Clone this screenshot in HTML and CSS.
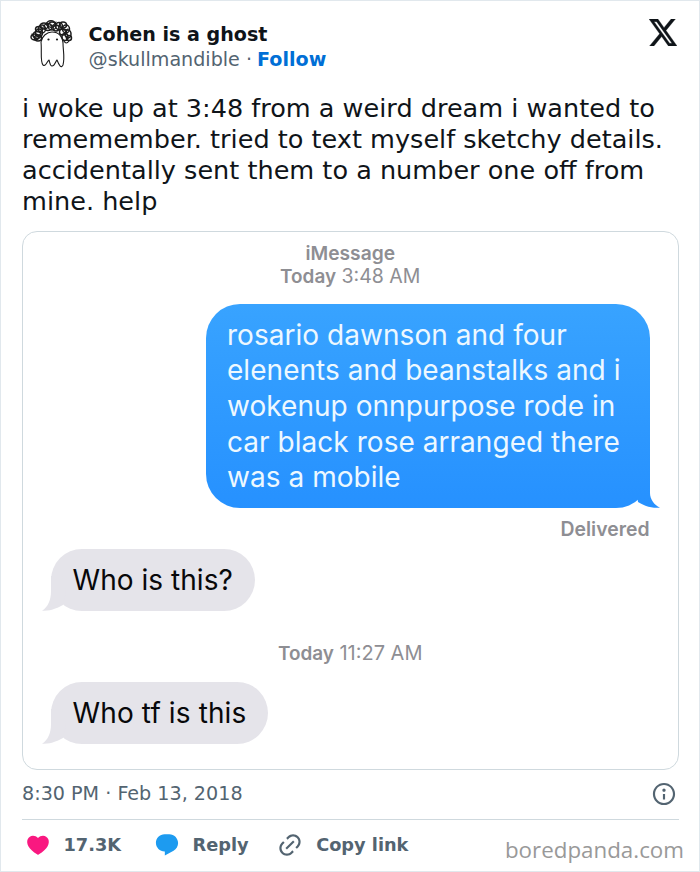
FILE: index.html
```
<!DOCTYPE html>
<html lang="en">
<head>
<meta charset="utf-8">
<title>Cohen is a ghost</title>
<link rel="stylesheet" href="styles.css">
</head>
<body>
<article class="tweet">
  <header class="header">
    <svg class="avatar" viewBox="0 0 58 58" fill="none" stroke="#1c1c1c" stroke-linecap="round" stroke-linejoin="round">
      <path stroke-width="1.1" d="M19 27C20 21 25 17 30 17C37 17 41 22 41 28C41 35 43 43 41 50C39 54 37 50 35 45C33 47 33 51 30 51C28 51 28 48 27 45C25 46 24 52 21 50C18 47 20 36 19 27Z"/>
      <g stroke-width="1.5">
        <ellipse cx="13" cy="22" rx="4" ry="3"/><ellipse cx="16" cy="23" rx="3.5" ry="3"/><ellipse cx="15" cy="20" rx="4" ry="3.5"/>
        <ellipse cx="17" cy="18" rx="3.5" ry="4"/><ellipse cx="17" cy="14" rx="3.5" ry="2.6"/><ellipse cx="20" cy="14" rx="3.5" ry="4"/>
        <ellipse cx="22" cy="11" rx="4" ry="3"/><ellipse cx="26" cy="12" rx="4" ry="3.5"/><ellipse cx="29" cy="9" rx="4.5" ry="3.2"/>
        <ellipse cx="30" cy="11" rx="4" ry="4"/><ellipse cx="34" cy="13" rx="3" ry="3"/><ellipse cx="37" cy="11" rx="3.5" ry="3.5"/>
        <ellipse cx="41" cy="10" rx="3.5" ry="3"/><ellipse cx="44" cy="14" rx="3.5" ry="4"/><ellipse cx="41" cy="17" rx="3.5" ry="3"/>
        <ellipse cx="46" cy="19" rx="3" ry="4"/><ellipse cx="43" cy="22" rx="3" ry="3.5"/><ellipse cx="47" cy="23" rx="2.5" ry="2.5"/>
      </g>
      <path stroke-width="1.1" d="M42 26Q44 30 47 26M10 19Q13 26 19 18M25 8Q30 14 34 7M38 9Q41 18 46 14"/>
      <g fill="#1c1c1c" stroke="none"><circle cx="26.500" cy="24.500" r="1.1"/><circle cx="35" cy="24.500" r="1.1"/></g>
    </svg>
    <div class="who">
      <div class="name">Cohen is a ghost</div>
      <div class="handle">@skullmandible · <span class="follow">Follow</span></div>
    </div>
    <svg class="x-logo" viewBox="1.2 2.2 21.6 19.6" preserveAspectRatio="none"><path fill="#0f1419" stroke="#0f1419" stroke-width=".25" d="M18.244 2.25h3.308l-7.227 8.26 8.502 11.24H16.17l-5.214-6.817L4.99 21.75H1.68l7.73-8.835L1.254 2.25H8.08l4.713 6.231zm-1.161 17.52h1.833L7.084 4.126H5.117z"/></svg>
  </header>
  <p class="text">i woke up at 3:48 from a weird dream i wanted to<br>rememember. tried to text myself sketchy details.<br>accidentally sent them to a number one off from<br>mine. help</p>
  <section class="media">
    <div class="stamp"><b class="service">iMessage</b><br><b>Today</b> 3:48 AM</div>
    <div class="bubble sent">rosario dawnson and four<br>elenents and beanstalks and i<br>wokenup onnpurpose rode in<br>car black rose arranged there<br>was a mobile
      <svg class="tail" viewBox="0 0 24 40"><defs><linearGradient id="blue" gradientUnits="userSpaceOnUse" x1="0" y1="-164" x2="0" y2="40"><stop stop-color="#38a3ff"/><stop offset="1" stop-color="#2691ff"/></linearGradient></defs><path fill="url(#blue)" d="M2 34L0 20L8 0H14V25C14 31 18 37 24 39.700C14 40.500 7 37 2 34Z"/></svg>
    </div>
    <div class="delivered">Delivered</div>
    <div class="bubble received first">Who is this?
      <svg class="tail" viewBox="0 0 24 40"><path d="M21 34L24 20L20 5H9V20C9 29 6 36 0 39.700C9 40.500 17 36 21 34Z"/></svg>
    </div>
    <div class="stamp later"><b>Today</b> <span class="time">11:27 AM</span></div>
    <div class="bubble received second">Who tf is this
      <svg class="tail" viewBox="0 0 24 40"><path d="M21 34L24 20L20 5H9V20C9 29 6 36 0 39.700C9 40.500 17 36 21 34Z"/></svg>
    </div>
  </section>
  <div class="date">
    <span>8:30 PM · Feb 13, 2018</span>
    <svg class="info" viewBox="0 0 24 24"><path fill="#536471" d="M13.5 8.5c0 .83-.67 1.5-1.5 1.5s-1.5-.67-1.5-1.5S11.170 7 12 7s1.5.67 1.5 1.500zM13 17v-5h-2v5h2zm-1 5.250c5.660 0 10.250-4.590 10.250-10.250S17.660 1.750 12 1.750 1.750 6.340 1.750 12 6.340 22.250 12 22.250zM20.250 12c0 4.560-3.690 8.250-8.250 8.250S3.750 16.560 3.750 12 7.440 3.750 12 3.750s8.250 3.690 8.250 8.250z"/></svg>
  </div>
  <footer class="actions">
    <svg class="icon" viewBox="0 0 24 24"><path fill="#f91880" d="M20.884 13.190c-1.351 2.480-4.001 5.120-8.379 7.670l-.503.300-.504-.300c-4.379-2.550-7.029-5.190-8.382-7.670-1.360-2.500-1.410-4.860-.514-6.670.887-1.790 2.647-2.910 4.601-3.010 1.651-.090 3.368.560 4.798 2.010 1.429-1.450 3.146-2.100 4.796-2.010 1.954.100 3.714 1.220 4.601 3.010.896 1.810.846 4.170-.514 6.670z"/></svg>
    <span class="likes">17.3K</span>
    <svg class="icon" viewBox="0 0 24 24"><path fill="#1d9bf0" d="M1.751 10c0-4.420 3.584-8 8.005-8h4.366c4.490 0 8.129 3.640 8.129 8.130 0 2.960-1.607 5.680-4.196 7.110l-8.054 4.460v-3.690h-.067c-4.490.100-8.183-3.510-8.183-8.010z"/></svg>
    <span class="reply">Reply</span>
    <svg class="icon" viewBox="0 0 24 24"><path fill="#536471" d="M18.360 5.640c-1.950-1.960-5.110-1.960-7.070 0L9.880 7.050 8.460 5.640l1.420-1.420c2.730-2.730 7.160-2.730 9.900 0 2.730 2.740 2.730 7.170 0 9.900l-1.420 1.420-1.410-1.420 1.410-1.410c1.960-1.960 1.960-5.120 0-7.070zm-2.120 3.530l-7.070 7.070-1.410-1.410 7.070-7.070 1.410 1.410zm-12.020.710l1.420-1.420 1.410 1.420-1.410 1.410c-1.960 1.960-1.960 5.120 0 7.070 1.950 1.960 5.110 1.960 7.070 0l1.410-1.410 1.420 1.410-1.420 1.420c-2.730 2.730-7.160 2.730-9.900 0-2.730-2.740-2.730-7.170 0-9.900z"/></svg>
    <span>Copy link</span>
    <span class="credit">boredpanda.com</span>
  </footer>
</article>
</body>
</html>
```
FILE: styles.css
```
* { box-sizing: border-box; }
body { margin: 0; background: #fff; }
svg { display: block; flex: none; }

.tweet {
  width: 700px;
  height: 872px;
  border: 1px solid #e1e8ed;
  padding: 14px 20.5px 0 21px;
  font-family: "DejaVu Sans", sans-serif;
  color: #0f1419;
}

.header { display: flex; height: 72px; }
.avatar { width: 58px; height: 58px; }
.who { margin-left: 8.6px; padding-top: 7px; font-size: 19.1px; line-height: 25px; white-space: nowrap; }
.name { font-weight: bold; }
.handle { color: #536471; }
.follow { margin-left: -1px; color: #006fd6; font-weight: bold; }
.x-logo { width: 28px; height: 27px; margin: 3.5px 1.5px 0 auto; }

.text { margin: 6.2px 0 0; font-size: 25.55px; line-height: 30.8px; white-space: nowrap; }

.media {
  display: flex;
  flex-direction: column;
  height: 539px;
  margin-top: 14.9px;
  padding: 10px 28px 0;
  border: 1px solid #cfd9de;
  border-radius: 15px;
  font-family: Inter, sans-serif;
}
.stamp { text-align: center; font-size: 19.5px; line-height: 23px; color: #8e8e93; }
.stamp b { font-weight: 600; font-size: 18.9px; }
.stamp .service { font-size: 19.2px; }
.stamp .time { font-size: 20px; }

.bubble { position: relative; font-size: 28px; line-height: 35.6px; letter-spacing: .04px; white-space: nowrap; }
.sent {
  align-self: flex-end;
  width: 444px;
  height: 204px;
  margin-top: 16px;
  padding: 13.6px 0 0 21.5px;
  border-radius: 34px;
  background: linear-gradient(#38a3ff, #2691ff);
  color: #edf8ff;
}
.received {
  align-self: flex-start;
  height: 62px;
  padding: 14px 0 0 21.5px;
  border-radius: 31px;
  background: #e5e4ea;
  color: #08080a;
}
.first { width: 204px; }
.second { width: 217px; letter-spacing: .12px; }
.tail { position: absolute; bottom: 0; width: 24px; height: 40px; }
.sent .tail { right: -10px; }
.received .tail { left: -9px; fill: #e5e4ea; }

.delivered { margin: 10px 0 9px; text-align: right; font-size: 19.4px; font-weight: 600; line-height: 22px; color: #8e8e93; }
.later { margin: 31px 0 17px; }

.date { display: flex; justify-content: space-between; align-items: center; height: 49.5px; padding-bottom: 2px; border-bottom: 1px solid #cfd9de; color: #536471; font-size: 19.15px; }
.info { width: 26px; height: 26px; margin-right: 2px; }

.actions { display: flex; align-items: center; height: 51px; padding-left: 2.500px; color: #536471; font-size: 17.75px; font-weight: bold; white-space: nowrap; }
.icon { width: 26px; height: 26px; margin-right: 13px; }
.likes { margin-right: 32.500px; }
.reply { margin-right: 28.500px; }
.credit { margin: 8px -5.500px 0 auto; font: 22.35px "Open Sans", sans-serif; color: #999; }
```
